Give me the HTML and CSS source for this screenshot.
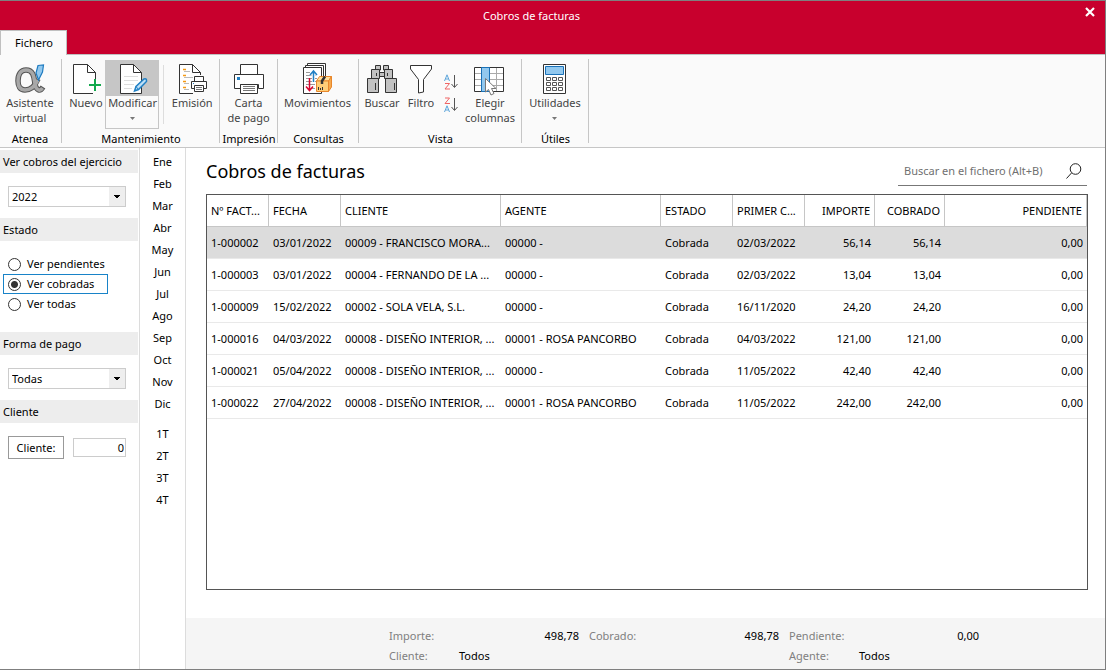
FILE: index.html
```html
<!DOCTYPE html>
<html lang="es">
<head>
<meta charset="utf-8">
<title>Cobros de facturas</title>
<link rel="stylesheet" href="styles.css">
</head>
<body>
<div class="window">
  <header class="titlebar">
    <button class="tab" type="button">Fichero</button>
    <h1 class="window-title">Cobros de facturas</h1>
    <button class="close" type="button" aria-label="Cerrar">
      <svg width="10" height="10" viewBox="0 0 10 10"><path d="M1 1l8 8M9 1L1 9" stroke="#fff" stroke-width="2.2"/></svg>
    </button>
  </header>

  <nav class="ribbon" aria-label="Cinta de opciones">
    <section class="group group-atenea">
      <div class="tools">
        <button class="tool" type="button">
          <svg class="icon" viewBox="0 0 32 32" fill="none">
            <path d="M24 15C21 22 17 26 11 26C6 26 4 22 4 17C4 10 7 6 12 6C20 6 20 14 21 20C22 26 26 28 29 23" stroke="#555" stroke-width="5.500"/>
            <path d="M24 16C21 22 17 26 11 26C6 26 4 22 4 17C4 10 7 6 12 6C20 6 20 14 21 20C22 26 26 28 28.500 24" stroke="#a8a8a8" stroke-width="3.500"/>
            <path d="M24 1.500L29.500 1L28.500 8L24.500 16L22 9Z" fill="#92c8ee" stroke="#1e7bc0" stroke-width="1.200"/>
          </svg>
          <span>Asistente<br>virtual</span>
        </button>
      </div>
      <h2 class="group-name">Atenea</h2>
    </section>
    <section class="group group-mant">
      <div class="tools">
        <button class="tool tool-new" type="button">
          <svg class="icon" viewBox="0 0 32 32" fill="none">
            <path d="M25.500 15V8.500L17.500.5H3.500V29.500H23" fill="#fff" stroke="#333"/>
            <path d="M17.500.5V8.500H25.500" stroke="#333"/>
            <path d="M25 15V26M19 21.500H31" stroke="#fff" stroke-width="4"/>
            <path d="M25 15V27M19 21H31" stroke="#12a84c" stroke-width="2"/>
          </svg>
          <span>Nuevo</span>
        </button>
        <button class="tool tool-active" type="button">
          <svg class="icon" viewBox="0 0 32 32" fill="none">
            <path d="M24.500 29.500H3.500V.5H16.500L24.500 8.500Z" fill="#fff" stroke="#333"/>
            <path d="M16.500.5V8.500H24.500" stroke="#333"/>
            <path d="M7 12.500H21M7 16.500H21M7 20.500H17M7 24.500H15" stroke="#ddd"/>
            <path d="M17.500 27L19 22.500L27 15Q30 14 29.500 17.500L21.500 25.500Z" fill="#bfe0f7" stroke="#2180c4" stroke-width="1.500"/>
            <path d="M19 22.500L21.500 25.500" stroke="#2180c4"/>
          </svg>
          <span>Modificar</span>
          <svg class="caret" viewBox="0 0 5 3"><path d="M0 0H5L2.500 3Z" fill="#777"/></svg>
        </button>
        <button class="tool tool-issue" type="button">
          <svg class="icon" viewBox="0 0 32 32" fill="none">
            <path d="M24.500 11V8.500L16.500.5H3.500V29.500H17" fill="#fff" stroke="#333"/>
            <path d="M16.500.5V8.500H24.500" stroke="#333"/>
            <path d="M7 5.500H10M7 11.500H10M7 17.500H10M7 23.500H10" stroke="#f59a16" stroke-width="1.300"/>
            <path d="M8 7.500H14M8 13.500H17M8 19.500H13M8 25.500H13" stroke="#bbb"/>
            <path d="M15.500 24.500V17.500H30.500V24.500Z" fill="#fff" stroke="#333"/>
            <path d="M18.500 17V12.500H27.500V17M18.500 21.500H27.500V27.500H18.500Z" fill="#fff" stroke="#333"/>
            <path d="M20 23.500H26M20 25.500H26" stroke="#777"/><path d="M17 19.500h1" stroke="#2180c4"/>
          </svg>
          <span>Emisión</span>
        </button>
      </div>
      <h2 class="group-name">Mantenimiento</h2>
    </section>
    <section class="group group-print">
      <div class="tools">
        <button class="tool" type="button">
          <svg class="icon" viewBox="0 0 32 32" fill="none" stroke="#333">
            <path d="M1.500 10.500H30.500V24.500H25.500V20.500H7.500V24.500H1.500Z" fill="#fff"/>
            <path d="M7.500 10V.5H24.500V10" fill="#fff"/>
            <path d="M7.500 20.500H24.500V29.500H7.500Z" fill="#fff"/>
            <path d="M10 22.500H22M10 24.500H22M10 26.500H22" stroke="#777"/>
            <path d="M4 14.500H7" stroke="#2180c4" stroke-width="3"/>
          </svg>
          <span>Carta<br>de pago</span>
        </button>
      </div>
      <h2 class="group-name">Impresión</h2>
    </section>
    <section class="group group-query">
      <div class="tools">
        <button class="tool" type="button">
          <svg class="icon" viewBox="0 0 32 32" fill="none">
            <path d="M6.500 26.500V-.5H24.500V20" fill="#fff" stroke="#333"/>
            <path d="M4.500 27.500V1.500H22.500V20" fill="#fff" stroke="#333"/>
            <path d="M2.500 29.500V3.500H20.500V29.500Z" fill="#fff" stroke="#333"/>
            <path d="M5 8.500H9M5 11.500H15M5 14.500H16M5 17.500H16M5 20.500H14M11 24.500H14" stroke="#999"/>
            <path d="M12.500 18V8M9 11l3.500-4L16 11" stroke="#fff" stroke-width="3"/>
            <path d="M12.500 18V8M9 11l3.500-4L16 11" stroke="#2180c4" stroke-width="1.500"/>
            <path d="M8.500 14V26M5 22.500l3.500 4L12 22.500" stroke="#d8052f" stroke-width="1.500"/>
            <path d="M15.500 17L18.500 12.500H30.500L27.500 17Z" fill="#ffdf9c" stroke="#e8872b"/>
            <path d="M15.500 17H27.500V27.500H15.500Z" fill="#ffce78" stroke="#e8872b"/>
            <path d="M27.500 17L30.500 12.500V23L27.500 27.500Z" fill="#f6a94d" stroke="#e8872b"/>
            <path d="M21 20V17L24 12.500" stroke="#333" stroke-width="2.500"/>
            <path d="M17.500 23v3M19.500 24v2M21.500 23v3" stroke="#333"/>
          </svg>
          <span>Movimientos</span>
        </button>
      </div>
      <h2 class="group-name">Consultas</h2>
    </section>
    <section class="group group-view">
      <div class="tools">
        <button class="tool tool-find" type="button">
          <svg class="icon" viewBox="0 0 32 32" fill="#c2c2c2" stroke="#333">
            <path d="M9.500 1.500H14.500V6H9.500ZM17.500 1.500H22.500V6H17.500Z"/>
            <path d="M13.500 8.500H18.500V12.500H13.500Z"/>
            <path d="M5.500 5.500H13.500V14.500H5.500ZM18.500 5.500H26.500V14.500H18.500Z"/>
            <path d="M1.500 14.500H12.500V28.500H1.500ZM19.500 14.500H30.500V28.500H19.500Z"/>
            <path d="M10.500 9v3M21.500 9v3M9.500 19v7M28.500 19v7" fill="none"/>
          </svg>
          <span>Buscar</span>
        </button>
        <button class="tool tool-filter" type="button">
          <svg class="icon" viewBox="0 0 32 32" fill="#fff" stroke="#333">
            <path d="M5.500 1.500H26.500V5L18.500 15.500V28L13.500 29V15.500L5.500 5Z"/>
          </svg>
          <span>Filtro</span>
        </button>
        <div class="sorts">
          <button class="sort" type="button" aria-label="Orden ascendente">
            <svg width="14" height="16" viewBox="0 0 14 16" fill="none"><path d="M.5 7L3 .8L5.500 7M1.500 5H4.500" stroke="#5da5da"/><path d="M1 9.500H5.500L1 15H6" stroke="#ef6464"/><path d="M10.500 1V13M7.500 10l3 3.500L13.500 10" stroke="#555"/></svg>
          </button>
          <button class="sort" type="button" aria-label="Orden descendente">
            <svg width="14" height="16" viewBox="0 0 14 16" fill="none"><path d="M1 1H5.500L1 6.500H6" stroke="#ef6464"/><path d="M.5 15L3 8.800L5.500 15M1.500 13H4.500" stroke="#5da5da"/><path d="M10.500 1V13M7.500 10l3 3.500L13.500 10" stroke="#555"/></svg>
          </button>
        </div>
        <button class="tool tool-columns" type="button">
          <svg class="icon" viewBox="0 0 32 32" fill="none">
            <path d="M.5 3.500H29.500V27.500H.5Z" fill="#fff" stroke="#333"/>
            <path d="M1 9.500H29M1 15.500H29M1 21.500H29M22.500 4V27" stroke="#aaa"/>
            <path d="M7.500 3.500H15.500V27.500H7.500Z" fill="#92c8ee" stroke="#1971b8"/>
            <path d="M11.500 14.500V28L14.500 25.500L17 31L20 29.500L17.500 24.500H22Z" fill="#fff" stroke="#777"/>
          </svg>
          <span>Elegir<br>columnas</span>
        </button>
      </div>
      <h2 class="group-name">Vista</h2>
    </section>
    <section class="group group-utils">
      <div class="tools">
        <button class="tool" type="button">
          <svg class="icon" viewBox="0 0 32 32" fill="none">
            <path d="M4.500.5H26.500V29.500H4.500Z" fill="#fff" stroke="#333"/>
            <path d="M6.500 2.500H24.500V10.500H6.500Z" fill="#92c8ee" stroke="#1971b8"/>
            <path d="M7.500 13.500h4v3h-4zM13.500 13.500h4v3h-4zM19.500 13.500h4v3h-4zM7.500 18.500h4v3h-4zM13.500 18.500h4v3h-4zM19.500 18.500h4v3h-4zM7.500 23.500h4v3h-4zM13.500 23.500h4v3h-4zM19.500 23.500h4v3h-4z" stroke="#555"/>
          </svg>
          <span>Utilidades</span>
          <svg class="caret" viewBox="0 0 5 3"><path d="M0 0H5L2.500 3Z" fill="#777"/></svg>
        </button>
      </div>
      <h2 class="group-name">Útiles</h2>
    </section>
  </nav>

  <div class="body">
    <aside class="filters">
      <h2 class="filter-head"><label for="year">Ver cobros del ejercicio</label></h2>
      <div class="filter-body">
        <select class="combo" id="year"><option>2022</option></select>
      </div>
      <h2 class="filter-head">Estado</h2>
      <div class="radios" role="radiogroup" aria-label="Estado">
        <label class="radio"><input type="radio" name="estado"><span>Ver pendientes</span></label>
        <label class="radio radio-focus"><input type="radio" name="estado" checked><span>Ver cobradas</span></label>
        <label class="radio"><input type="radio" name="estado"><span>Ver todas</span></label>
      </div>
      <h2 class="filter-head"><label for="pay">Forma de pago</label></h2>
      <div class="filter-body">
        <select class="combo" id="pay"><option>Todas</option></select>
      </div>
      <h2 class="filter-head">Cliente</h2>
      <div class="client">
        <button class="client-button" type="button">Cliente:</button>
        <input class="client-input" type="text" value="0" aria-label="Cliente">
      </div>
    </aside>

    <nav class="periods" aria-label="Periodos">
      <a href="#">Ene</a><a href="#">Feb</a><a href="#">Mar</a><a href="#">Abr</a><a href="#">May</a><a href="#">Jun</a><a href="#">Jul</a><a href="#">Ago</a><a href="#">Sep</a><a href="#">Oct</a><a href="#">Nov</a><a href="#">Dic</a>
      <a class="quarter-first" href="#">1T</a><a href="#">2T</a><a href="#">3T</a><a href="#">4T</a>
    </nav>

    <main class="main">
      <div class="main-head">
        <h2 class="main-title">Cobros de facturas</h2>
        <div class="search">
          <input type="text" placeholder="Buscar en el fichero (Alt+B)" aria-label="Buscar en el fichero">
          <svg width="16" height="16" viewBox="0 0 16 16" fill="none" stroke="#222"><circle cx="9.500" cy="6" r="5.300"/><path d="M5.500 10L.5 15.500"/></svg>
        </div>
      </div>
      <div class="grid">
        <table>
          <colgroup><col class="c-num"><col class="c-date"><col class="c-name"><col class="c-name"><col class="c-date"><col class="c-date"><col class="c-sum"><col class="c-sum"><col></colgroup>
          <thead>
            <tr><th>Nº FACT...</th><th>FECHA</th><th>CLIENTE</th><th>AGENTE</th><th>ESTADO</th><th>PRIMER C...</th><th class="num">IMPORTE</th><th class="num">COBRADO</th><th class="num">PENDIENTE</th></tr>
          </thead>
          <tbody>
            <tr class="selected"><td>1-000002</td><td>03/01/2022</td><td>00009 - FRANCISCO MORA...</td><td>00000 -</td><td>Cobrada</td><td>02/03/2022</td><td class="num">56,14</td><td class="num">56,14</td><td class="num">0,00</td></tr>
            <tr><td>1-000003</td><td>03/01/2022</td><td>00004 - FERNANDO DE LA ...</td><td>00000 -</td><td>Cobrada</td><td>02/03/2022</td><td class="num">13,04</td><td class="num">13,04</td><td class="num">0,00</td></tr>
            <tr><td>1-000009</td><td>15/02/2022</td><td>00002 - SOLA VELA, S.L.</td><td>00000 -</td><td>Cobrada</td><td>16/11/2020</td><td class="num">24,20</td><td class="num">24,20</td><td class="num">0,00</td></tr>
            <tr><td>1-000016</td><td>04/03/2022</td><td>00008 - DISEÑO INTERIOR, ...</td><td>00001 - ROSA PANCORBO</td><td>Cobrada</td><td>04/03/2022</td><td class="num">121,00</td><td class="num">121,00</td><td class="num">0,00</td></tr>
            <tr><td>1-000021</td><td>05/04/2022</td><td>00008 - DISEÑO INTERIOR, ...</td><td>00000 -</td><td>Cobrada</td><td>11/05/2022</td><td class="num">42,40</td><td class="num">42,40</td><td class="num">0,00</td></tr>
            <tr><td>1-000022</td><td>27/04/2022</td><td>00008 - DISEÑO INTERIOR, ...</td><td>00001 - ROSA PANCORBO</td><td>Cobrada</td><td>11/05/2022</td><td class="num">242,00</td><td class="num">242,00</td><td class="num">0,00</td></tr>
          </tbody>
        </table>
      </div>
      <footer class="totals">
        <div class="total"><span class="label">Importe:</span><span class="value">498,78</span></div>
        <div class="total"><span class="label">Cobrado:</span><span class="value">498,78</span></div>
        <div class="total"><span class="label">Pendiente:</span><span class="value">0,00</span></div>
        <div class="total"><span class="label">Cliente:</span><span>Todos</span></div>
        <div class="total total-agent"><span class="label">Agente:</span><span>Todos</span></div>
      </footer>
    </main>
  </div>
</div>
</body>
</html>
```

FILE: styles.css
```css
* { box-sizing: border-box; }
body { margin: 0; font: 11px/15px "Noto Sans", "Open Sans", sans-serif; color: #000; background: #fff; }
button, input, select { font: inherit; color: inherit; }
button { background: none; border: 0; padding: 0; }
h1, h2 { margin: 0; font: inherit; }
a { color: inherit; text-decoration: none; }

.window { display: flex; flex-direction: column; min-height: 100vh; border: 1px solid #7f7f7f; border-left: 0; }

.titlebar { display: grid; grid-template-columns: 1fr auto 1fr; height: 54px; padding-right: 10px; background: #c8002d; border-bottom: 1px solid #c0c0c0; color: #fff; }
.tab { align-self: end; justify-self: start; width: 67px; height: 25px; margin-bottom: -1px; padding: 0 0 2px 1px; background: #fafafa; border: 1px solid #c0c0c0; border-bottom: 0; color: #000; }
.window-title { padding-top: 7px; padding-right: 32px; }
.close { justify-self: end; align-self: start; margin-top: 6px; height: 10px; line-height: 0; }

.ribbon { display: flex; height: 93px; background: #fafafa; border-bottom: 1px solid #c6c6c6; }
.group { display: flex; flex-direction: column; margin: 4px 0; border-right: 1px solid #c6c6c6; }
.group-atenea { width: 62px; }
.group-mant { width: 158px; }
.group-print { width: 58px; }
.group-query { width: 81px; }
.group-view { width: 163px; }
.group-utils { width: 67px; }
.tools { display: flex; justify-content: center; height: 72px; padding-top: 1px; }
.tool { display: flex; flex-direction: column; align-items: center; justify-content: flex-start; color: #444; white-space: nowrap; }
.icon { flex: none; width: 32px; height: 32px; margin: 4px 0 -1px; overflow: visible; }
.group-name { height: 12px; padding-left: 1px; line-height: 15px; text-align: center; white-space: nowrap; }
.caret { width: 5px; height: 3px; margin-top: 7px; }
.group-mant .tools { justify-content: flex-start; padding-left: 3px; }
.tool-new { width: 40px; padding-left: 2px; }
.tool-active { width: 55px; height: 69px; padding-left: 1px; border: 1px solid #c6c6c6; background: linear-gradient(#c6c6c6 35px, transparent 35px); }
.tool-active .icon { margin-top: 3px; }
.tool-issue { width: 56px; margin-left: 4px; padding-left: 2px; background: linear-gradient(#ddd, #ddd) 0 5px / 1px 59px no-repeat; }
.group-atenea .tool, .group-query .tool { padding-right: 1px; }
.group-atenea .group-name { padding-right: 1px; padding-left: 0; }
.group-view .tools { justify-content: flex-start; }
.tool-find { width: 46px; }
.tool-filter { width: 32px; }
.sorts { display: flex; flex-direction: column; gap: 7px; width: 28px; padding-top: 14px; align-items: center; }
.sort { height: 16px; line-height: 0; }
.tool-columns { width: 50px; }

.body { display: flex; flex: 1; }
.filters { flex: none; width: 140px; padding-top: 2px; padding-right: 1px; border-right: 1px solid #dcdcdc; }
.filter-head { height: 23px; padding-left: 3px; line-height: 23px; background: #ededed; }
.filter-body { padding: 13px 12px 11px 8px; }
.combo { display: block; width: 100%; height: 21px; padding: 0 3px; appearance: none; border: 1px solid #ccc; border-radius: 0;
  background: linear-gradient(#000, #000) right 7px top 10px / 2px 1px no-repeat, linear-gradient(#000, #000) right 6px top 9px / 4px 1px no-repeat, linear-gradient(#000, #000) right 5px top 8px / 6px 1px no-repeat, linear-gradient(#eee, #eee) right / 16px 100% no-repeat, #fff; }
.radios { padding: 13px 3px 18px; }
.radio { display: flex; align-items: center; gap: 6px; width: 105px; height: 20px; padding-left: 5px; }
.radio span { padding-bottom: 2px; }
.radio-focus { box-shadow: 0 0 0 1px #1883c8 inset; }
.radio input { appearance: none; width: 13px; height: 13px; margin: 0; border: 1px solid #333; border-radius: 50%; background: #fff; }
.radio input:checked { background: radial-gradient(#333 0 3px, #fff 4px); }
.client { display: flex; align-items: center; justify-content: space-between; padding: 13px 12px 0 8px; }
.client-button { width: 56px; height: 23px; border: 1px solid #999; background: #fff; }
.client-input { width: 53px; height: 19px; padding: 0 1px; border: 1px solid #ccc; text-align: right; }

.periods { flex: none; display: flex; flex-direction: column; width: 46px; padding-top: 3px; border-right: 1px solid #dcdcdc; text-align: center; line-height: 22px; }
.quarter-first { margin-top: 8px; }

.main { flex: 1; min-width: 0; display: flex; flex-direction: column; }
.main-head { display: flex; justify-content: space-between; height: 46px; padding: 0 18px 0 20px; }
.main-title { padding-top: 11px; font-size: 18px; line-height: 24px; }
.search { display: flex; align-items: center; justify-content: space-between; width: 189px; height: 30px; margin-top: 8px; padding: 0 5px 0 6px; border-bottom: 1px solid #777; }
.search input { width: 150px; padding: 0; border: 0; outline: 0; background: none; }
.search input::placeholder { color: #707070; opacity: 1; }

.grid { flex: 1; margin: 0 17px 28px 20px; border: 1px solid #555; }
table { width: 100%; table-layout: fixed; border-collapse: separate; border-spacing: 0; }
.c-num { width: 62px; }
.c-date { width: 72px; }
.c-name { width: 160px; }
.c-sum { width: 70px; }
th, td { height: 32px; padding: 0 4px; font-weight: normal; text-align: left; white-space: nowrap; }
th { border-right: 1px solid #c6c6c6; border-bottom: 1px solid #c6c6c6; }
td { border-bottom: 1px solid #e9e9e9; }
.num { text-align: right; }
.selected td { background: #dcdcdc; }

.totals { display: grid; grid-template-columns: 190px 190px 190px; grid-auto-rows: 20px; column-gap: 10px; height: 51px; padding: 8px 0 0 203px; background: #f5f5f5; line-height: 20px; }
.total { display: flex; }
.label { width: 70px; color: #808080; }
.value { margin-left: auto; }
.total-agent { grid-column: 3; }
```
